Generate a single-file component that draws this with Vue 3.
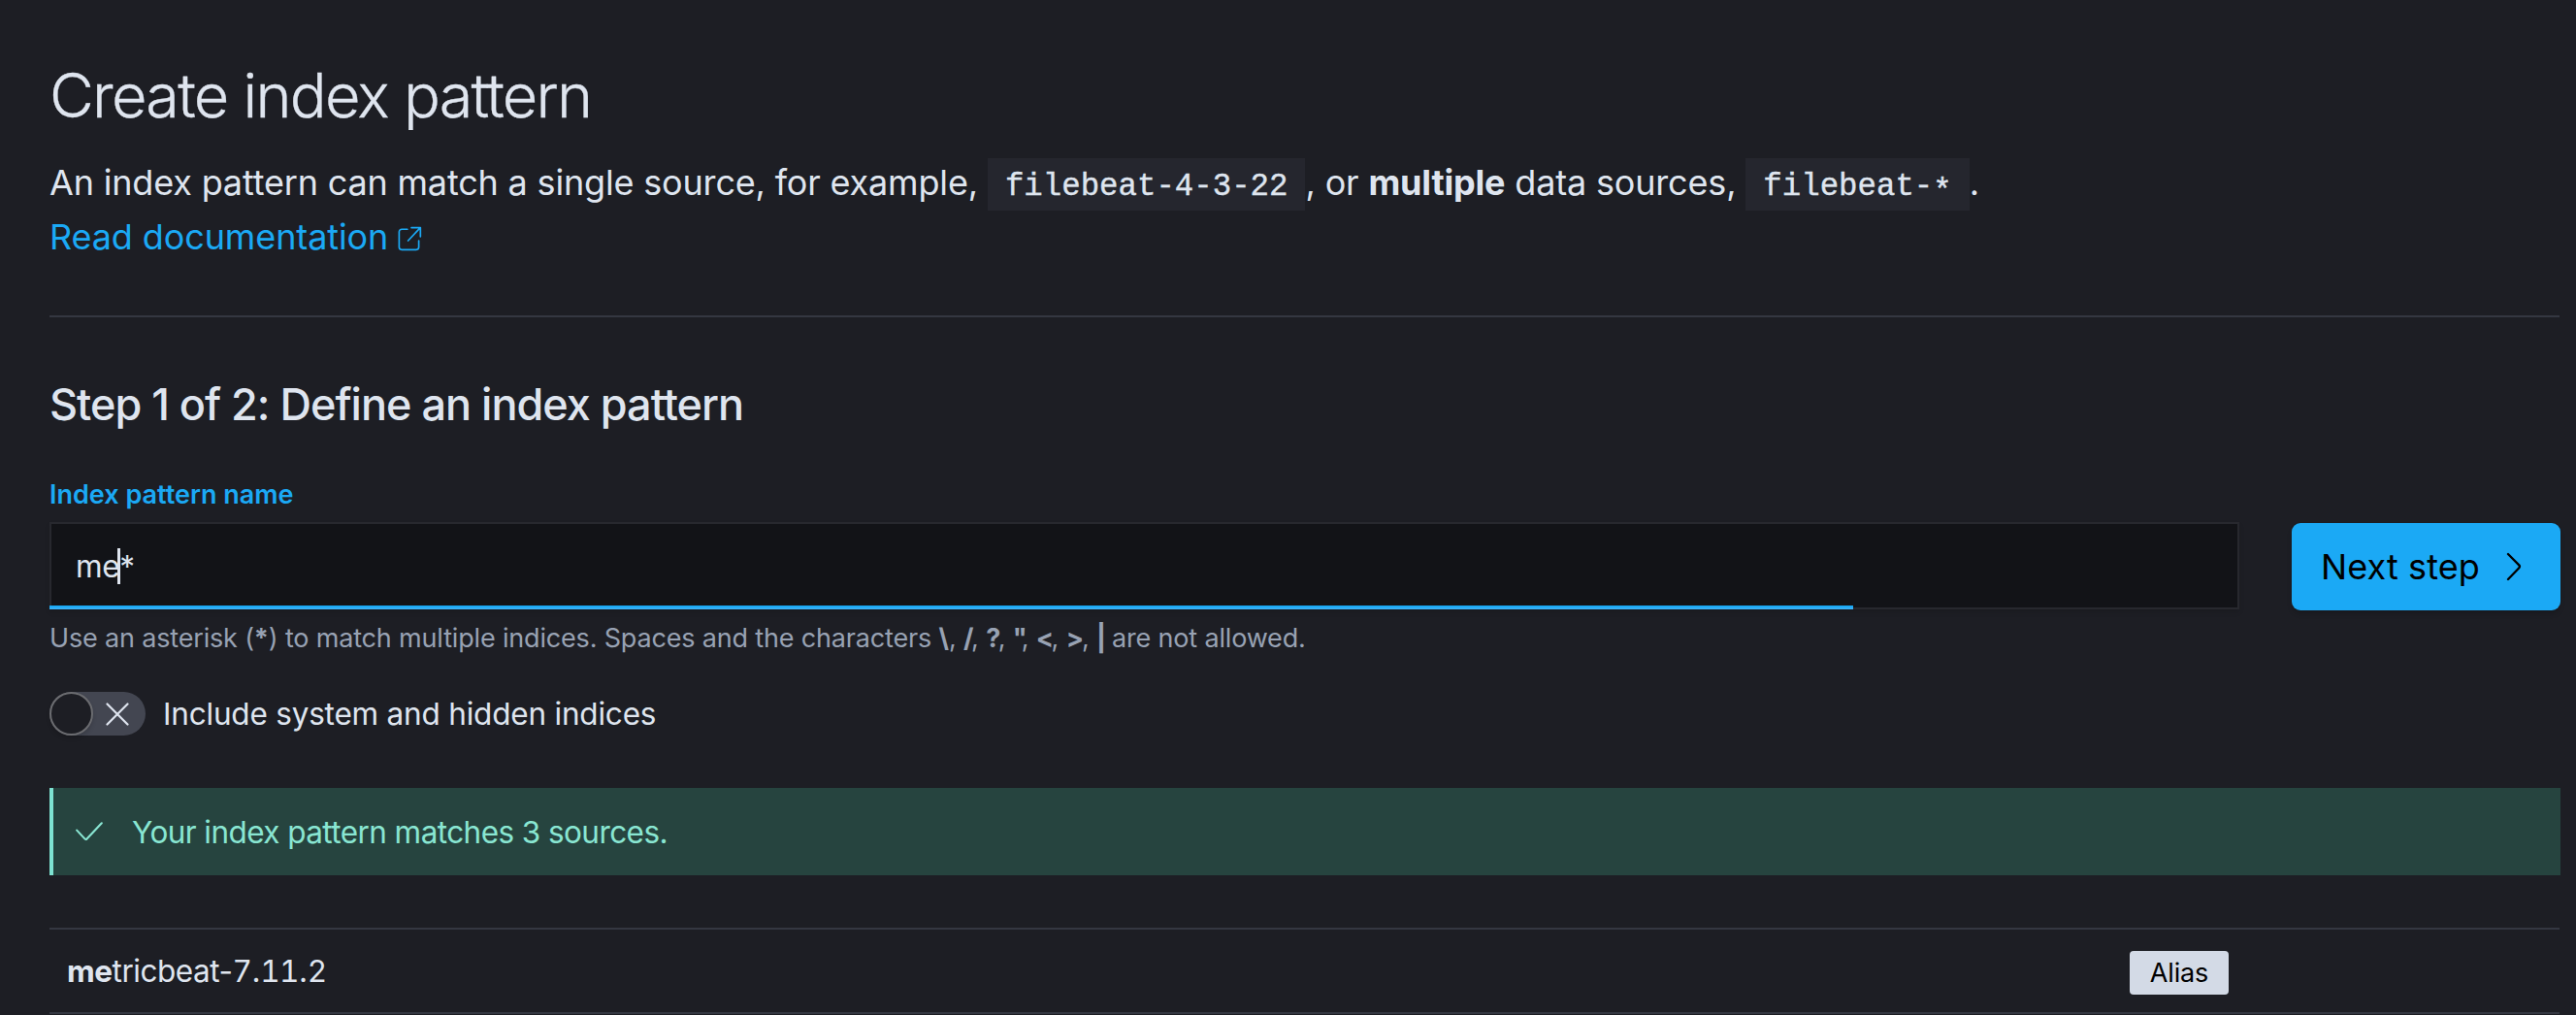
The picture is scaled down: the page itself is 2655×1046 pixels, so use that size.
<script setup>
const badChars = ['\\', '/', '?', '"', '<', '>', '|']
const gaps = [0, -2.5, -2.5, -6, -2.5, -2, -1.5]
</script>

<template>
  <main class="page">
    <h1 class="title"><span>Create index pattern</span></h1>
    <p class="intro">
      <span>An index pattern can match a single source, for example,</span>
      <code>filebeat-4-3-22</code><span>, or <strong>multiple</strong> data sources,</span>
      <code>filebeat-<span class="star">*</span></code><span>.</span>
    </p>
    <a class="doc"><span>Read documentation</span>
      <svg viewBox="0 0 16 16" width="27" height="27" fill="none" stroke="currentColor" stroke-width="1" stroke-linecap="round" stroke-linejoin="round">
        <path d="M7 2.5H3.6A1.6 1.6 0 0 0 2 4.1v9.3A1.6 1.6 0 0 0 3.6 15h8.8a1.6 1.6 0 0 0 1.6-1.6V9.5M9.5 1.5H15V7M14.8 1.7L7.5 9.5" />
      </svg>
    </a>
    <hr class="rule" />
    <h2 class="step"><span>Step 1 of 2: Define an index pattern</span></h2>
    <label class="label"><span>Index pattern name</span></label>
    <div class="form">
      <div class="input"><span>me</span><i class="caret"></i><span>*</span></div>
      <button class="next"><span>Next step</span>
        <svg viewBox="0 0 16 30" width="16" height="30" fill="none" stroke="currentColor" stroke-width="2.3" stroke-linecap="round" stroke-linejoin="round">
          <path d="M2 2L13.3 13.4Q14.6 14.8 13.3 16.2L2 28" />
        </svg>
      </button>
    </div>
    <p class="help"><span>Use an asterisk (<strong>*</strong>) to match multiple indices. Spaces and the characters <template v-for="(c, i) in badChars" :key="c"><strong :style="{ letterSpacing: gaps[i] + 'px' }">{{ c }}</strong>{{ i < badChars.length - 1 ? ', ' : ' ' }}</template>are not allowed.</span></p>
    <div class="toggle">
      <div class="switch">
        <div class="thumb"></div>
        <svg viewBox="0 0 24 24" width="24" height="24" stroke="#dfe5ef" stroke-width="2.2" stroke-linecap="round"><path d="M1.5 1.5L22.5 22.5M22.5 1.5L1.5 22.5" /></svg>
      </div>
      <span>Include system and hidden indices</span>
    </div>
    <div class="callout">
      <svg viewBox="0 0 28 20" width="28" height="20" fill="none" stroke="currentColor" stroke-width="2.1" stroke-linecap="round" stroke-linejoin="round"><path d="M1.2 8.6L9.6 17.6Q10.6 18.6 11.5 17.5L26.8 1.3" /></svg>
      <span>Your index pattern matches 3 sources.</span>
    </div>
    <div class="row">
      <div class="name"><strong>me</strong>tricbeat-<span class="num">7</span>.<span class="num">11</span>.<span class="num">2</span></div>
      <div class="badge">Alias</div>
    </div>
  </main>
</template>

<style>
body { background: #1d1e24; }
</style>

<style scoped>
* { box-sizing: border-box; margin: 0; }
.page {
  width: 2655px; height: 1046px; overflow: hidden; background: #1d1e24; color: #dfe5ef;
  padding: 63px 16px 0 51px; display: flex; flex-direction: column;
  font-family: Inter, "Liberation Sans", sans-serif; font-size: 31.5px; white-space: nowrap;
}
.page > * { flex: none; }
strong { font-weight: 700; }
.title { font-size: 63px; font-weight: 300; letter-spacing: -1.75px; height: 72px; line-height: 71px; -webkit-text-stroke: 0.3px currentColor; }
.intro { margin-top: 27px; height: 56px; line-height: 56px; font-size: 36px; letter-spacing: -0.175px; display: flex; align-items: center; }
.intro > span, .doc > span { padding-bottom: 4px; }
code {
  font-family: "Liberation Mono", monospace; font-size: 32.4px; letter-spacing: 0; -webkit-text-stroke: 0.4px currentColor;
  background: #25262e; height: 54px; line-height: 49px; padding: 5px 18px 0; margin-left: 10px;
}
.star { position: relative; top: 5px; }
.doc { height: 56px; line-height: 56px; font-size: 36px; letter-spacing: -0.11px; color: #1ba9f5; display: flex; align-items: center; gap: 8px; }
.doc svg { margin-top: -2px; }
.rule { border: 0; height: 2px; background: #343741; margin-top: 51px; margin-right: 1px; }
.step { margin-top: 62px; height: 56px; line-height: 56px; font-size: 45px; font-weight: 500; letter-spacing: -1px; }
.label { margin-top: 45px; height: 40px; line-height: 40px; font-size: 27px; font-weight: 600; color: #1ba9f5; }
.form { margin-top: 8px; display: flex; justify-content: space-between; height: 91px; }
.input {
  position: relative; width: 2257px; height: 90px; border: 2px solid #27282e; padding: 1px 25px 0; display: flex; align-items: center;
  background: #121317; box-shadow: 0 3px 5px rgba(0, 0, 0, .12); letter-spacing: -0.3px;
}
.input::after {
  content: ""; position: absolute; left: -2px; bottom: -2px; width: 1859px; height: 4px;
  background: linear-gradient(#1ba9f5 50%, #36b0f6 50%);
}
.caret { width: 3px; height: 37px; background: #dfe5ef; margin: 0 -1px 0 -2px; }
.next {
  margin-top: 1px; width: 277px; height: 90px; border: 0; border-radius: 9px; background: #1ba9f5; color: #000;
  font: 400 36px Inter, sans-serif; padding: 0 40px 0 30px; display: flex; align-items: center; justify-content: space-between;
  box-shadow: 0 4px 5px rgba(0, 0, 0, .15); letter-spacing: 0.1px;
}
.help { margin-top: 8px; height: 42px; line-height: 42px; font-size: 27px; letter-spacing: -0.17px; color: #98a2b3; }
.toggle { margin-top: 34px; display: flex; align-items: center; height: 45px; gap: 18px; letter-spacing: -0.2px; }
.switch { width: 99px; height: 45px; border-radius: 23px; background: #434651; display: flex; align-items: center; gap: 13px; }
.thumb { width: 45px; height: 45px; border-radius: 50%; border: 2px solid #6b6c70; background: #1d1e24; box-shadow: 0 3px 4px rgba(0, 0, 0, .15); }
.callout {
  margin-top: 54px; height: 90px; background: #26443f; border-left: 4px solid #7de2d1; color: #89e6d2;
  padding-left: 23px; display: flex; align-items: center; gap: 30px; letter-spacing: -0.57px;
}
.row { margin: 54px 1px 0 0; height: 89px; border-top: 2px solid #343741; border-bottom: 2px solid #343741; display: flex; align-items: center; padding: 0 341px 0 18px; justify-content: space-between; }
.name { letter-spacing: -0.46px; }
.num { font-feature-settings: "tnum" 1; }
.badge { width: 102px; height: 45px; border-radius: 4px; background: #d3dae6; color: #000; font-size: 27px; line-height: 45px; text-align: center; margin-top: 4px; letter-spacing: -0.135px; }
</style>
